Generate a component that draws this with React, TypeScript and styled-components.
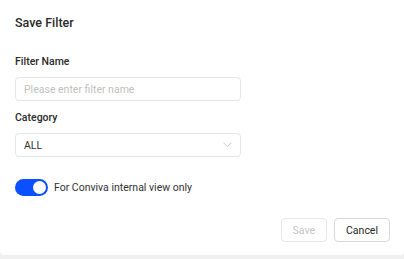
import React from 'react';
import styled, { createGlobalStyle } from 'styled-components';

const GlobalStyle = createGlobalStyle`
  html, body {
    margin: 0;
    padding: 0;
    background: #f0f0f0;
    font-family: Roboto, "Liberation Sans", Arial, sans-serif;
  }
`;

const Modal = styled.section`
  width: 404px;
  height: 255px;
  box-sizing: border-box;
  background: #ffffff;
  border-radius: 0 0 4px 4px;
  display: flex;
  flex-direction: column;
`;

const Header = styled.header`
  padding: 13px 15px 0;
  font-size: 12.5px;
  line-height: 20px;
  font-weight: 500;
  color: #2a2a2a;
`;

const Body = styled.div`
  flex: 1;
  padding: 21px 15px 0;
  display: flex;
  flex-direction: column;
`;

const Label = styled.div`
  font-size: 10.5px;
  line-height: 16px;
  font-weight: 500;
  color: #2a2a2a;
  margin-bottom: 7px;
`;

const Field = styled.div`
  width: 226px;
  height: 24px;
  box-sizing: border-box;
  border: 1px solid #e6e6e6;
  border-radius: 4px;
  display: flex;
  align-items: center;
  padding: 0 8px;
  font-size: 10.5px;
  margin-bottom: 9px;
`;

const Input = styled.input`
  border: 0;
  outline: none;
  padding: 0;
  flex: 1;
  font: inherit;
  color: #262626;
  background: transparent;
  &::placeholder {
    color: #bfbfbf;
  }
`;

const SelectValue = styled.span`
  flex: 1;
  color: #333333;
`;

const ToggleRow = styled.label`
  display: flex;
  align-items: center;
  gap: 6px;
  margin-top: 13px;
  font-size: 10.5px;
  color: #333333;
`;

const Track = styled.span<{ $on: boolean }>`
  position: relative;
  width: 33px;
  height: 17px;
  border-radius: 9px;
  background: ${(p) => (p.$on ? '#0b50ff' : '#cccccc')};
  flex-shrink: 0;
`;

const Knob = styled.span<{ $on: boolean }>`
  position: absolute;
  top: 2px;
  left: ${(p) => (p.$on ? '18px' : '2px')};
  width: 13px;
  height: 13px;
  border-radius: 50%;
  background: #ffffff;
`;

const Footer = styled.footer`
  display: flex;
  justify-content: flex-end;
  gap: 7px;
  padding: 0 14px 13px;
`;

const Button = styled.button`
  height: 24px;
  box-sizing: border-box;
  padding: 0 11px;
  border: 1px solid ${(p) => (p.disabled ? '#e8e8e8' : '#d9d9d9')};
  border-radius: 4px;
  background: #ffffff;
  font-family: inherit;
  font-size: 10.5px;
  color: ${(p) => (p.disabled ? '#c4c4c4' : '#262626')};
`;

const Chevron = () => (
  <svg width="9" height="6" viewBox="0 0 9 6" fill="none">
    <path d="M0.5 0.8 L4.5 4.8 L8.5 0.8" stroke="#bfbfbf" strokeWidth="0.9" />
  </svg>
);

export default function App() {
  return (
    <>
      <GlobalStyle />
      <Modal>
        <Header>Save Filter</Header>
        <Body>
          <Label>Filter Name</Label>
          <Field>
            <Input placeholder="Please enter filter name" />
          </Field>
          <Label>Category</Label>
          <Field>
            <SelectValue>ALL</SelectValue>
            <Chevron />
          </Field>
          <ToggleRow>
            <Track $on>
              <Knob $on />
            </Track>
            For Conviva internal view only
          </ToggleRow>
        </Body>
        <Footer>
          <Button disabled>Save</Button>
          <Button>Cancel</Button>
        </Footer>
      </Modal>
    </>
  );
}
